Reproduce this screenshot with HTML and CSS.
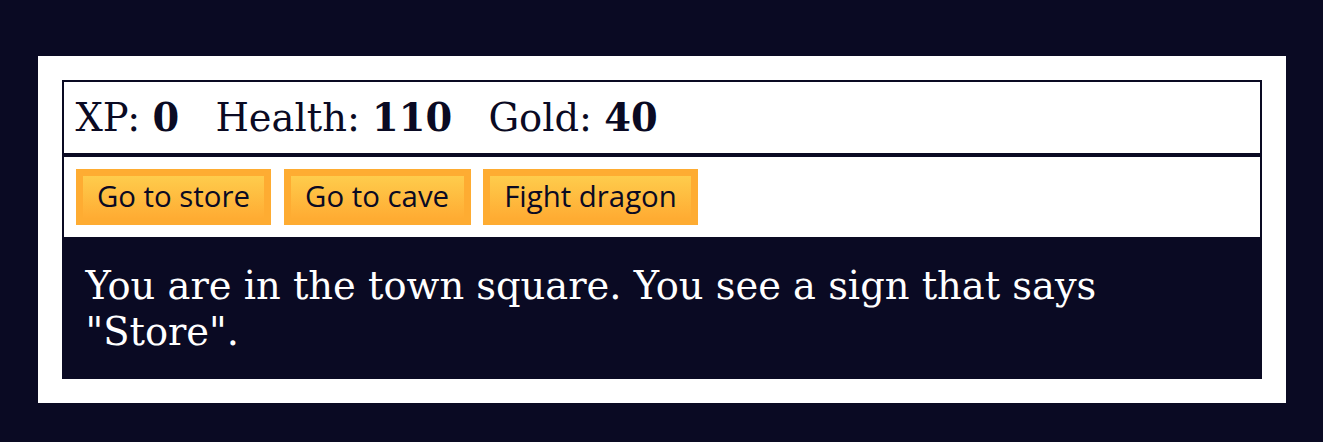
FILE: index.html
```html
<!DOCTYPE html>
<html lang="en">
<head>
<meta charset="utf-8">
<title>RPG - Dragon Repeller</title>
<link rel="stylesheet" href="styles.css">
</head>
<body>
<div class="game">
  <div class="stats">
    <span class="stat">XP: <strong>0</strong></span>
    <span class="stat">Health: <strong>110</strong></span>
    <span class="stat">Gold: <strong>40</strong></span>
  </div>
  <div class="controls">
    <button class="btn">Go to store</button>
    <button class="btn">Go to cave</button>
    <button class="btn">Fight dragon</button>
  </div>
  <div class="text">You are in the town square. You see a sign that says "Store".</div>
</div>
</body>
</html>
```
FILE: styles.css
```css
body {
  margin: 0;
  background-color: #0a0a23;
  font-family: "DejaVu Serif", serif;
  font-size: 38.4px;
  line-height: 47px;
}

.game {
  width: 1200px;
  margin: 56px auto 0;
  padding: 24px;
  background-color: #ffffff;
  color: #ffffff;
}

.stats,
.controls {
  border: 2px solid #0a0a23;
  padding: 12px;
  color: #0a0a23;
}

.stat {
  padding-right: 24px;
}

.btn {
  font-family: "Open Sans", sans-serif;
  font-size: 29.4px;
  line-height: 37.6px;
  padding: 2.4px 14.4px;
  color: #0a0a23;
  background-color: #feac32;
  background-image: linear-gradient(#fecc4c, #ffac33);
  border: 7px solid #feac32;
  cursor: pointer;
  vertical-align: top;
}

.text {
  background-color: #0a0a23;
  color: #ffffff;
  padding: 24px;
  line-height: 46px;
}
```
